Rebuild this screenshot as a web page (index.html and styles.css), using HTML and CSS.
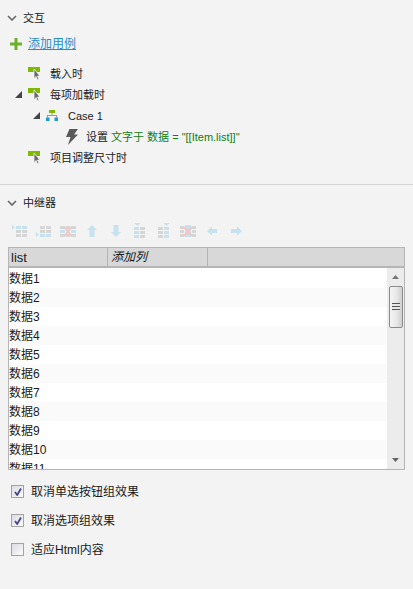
FILE: index.html
```html
<!DOCTYPE html>
<html>

<head>
  <title>交互</title>
  <link rel="stylesheet" href="styles.css">
</head>

<body>
  <svg class="defs" width="0" height="0">
    <symbol id="event" viewBox="0 0 12 14">
      <path d="M0 0H12V5H0Z" fill="#7fb900" />
      <path d="M6 2V12L8 9.500L9.500 13L11 12.300L9.500 9H12Z" fill="#6a6a6a" stroke="#f3f3f3" stroke-width="0.8" />
    </symbol>
    <symbol id="tri" viewBox="0 0 8 8">
      <path d="M7 0V7H0Z" fill="#444" />
    </symbol>
    <symbol id="chev" viewBox="0 0 10 6">
      <path d="M1 1L5 5L9 1" fill="none" stroke="#666" stroke-width="1.6" />
    </symbol>
  </svg>

  <section class="panel interactions">
    <div class="heading">
      <svg class="chevron"><use href="#chev" /></svg>
      <span>交互</span>
    </div>
    <div class="add-case">
      <svg class="plus" viewBox="0 0 12 12"><path d="M4.500 0H7.500V4.500H12V7.500H7.500V12H4.500V7.500H0V4.500H4.500Z" fill="#6eb22c" /></svg>
      <a href="#">添加用例</a>
    </div>
    <ul class="tree">
      <li class="node level1">
        <span class="toggle"></span>
        <svg class="ev"><use href="#event" /></svg>
        <span>载入时</span>
      </li>
      <li class="node level1">
        <span class="toggle"><svg class="tri"><use href="#tri" /></svg></span>
        <svg class="ev"><use href="#event" /></svg>
        <span>每项加载时</span>
      </li>
      <li class="node level2">
        <span class="toggle"><svg class="tri"><use href="#tri" /></svg></span>
        <svg class="case-icon" viewBox="0 0 12 11">
          <path d="M3 0H9V3H3Z" fill="#7fb900" />
          <path d="M5.500 3H6.500V5H11V7.500H10V6H2V7.500H1V5H5.500Z" fill="#999" />
          <path d="M0 7.500H3.500V11H0ZM8.500 7.500H12V11H8.500Z" fill="#1c9ad6" />
        </svg>
        <span class="case-name">Case 1</span>
      </li>
      <li class="node level3">
        <svg class="bolt" viewBox="0 0 12 16"><path d="M3.500 0H12L8 5.500H12L2 16L4.500 8H0Z" fill="#595959" /></svg>
        <span>设置 <span class="act">文字于 数据 = "[[Item.list]]"</span></span>
      </li>
      <li class="node level1">
        <span class="toggle"></span>
        <svg class="ev"><use href="#event" /></svg>
        <span>项目调整尺寸时</span>
      </li>
    </ul>
  </section>

  <section class="panel repeater">
    <div class="heading">
      <svg class="chevron"><use href="#chev" /></svg>
      <span>中继器</span>
    </div>

    <div class="toolbar">
      <svg viewBox="0 0 16 16"><path d="M0 2L3 4.500L0 7Z" fill="#c5e2ee" /><path d="M4 3H9V6H4ZM10 3H15V6H10Z" fill="#c5e2ee" /><path d="M4 7H9V10H4ZM10 7H15V10H10ZM4 11H9V14H4ZM10 11H15V14H10Z" fill="#d6d6d6" /></svg>
      <svg viewBox="0 0 16 16"><path d="M0 9L3 11.500L0 14Z" fill="#c5e2ee" /><path d="M4 11H9V14H4ZM10 11H15V14H10Z" fill="#c5e2ee" /><path d="M4 3H9V6H4ZM10 3H15V6H10ZM4 7H9V10H4ZM10 7H15V10H10Z" fill="#d6d6d6" /></svg>
      <svg viewBox="0 0 16 16"><path d="M0 3H5V6H0ZM6 3H10V6H6ZM11 3H16V6H11ZM0 11H5V14H0ZM6 11H10V14H6ZM11 11H16V14H11Z" fill="#d6d6d6" /><path d="M0 7H5V10H0ZM11 7H16V10H11Z" fill="#c5e2ee" /><path d="M4.500 4L11.500 13M11.500 4L4.500 13" stroke="#f3c6c6" stroke-width="2" /></svg>
      <svg viewBox="0 0 16 16"><path d="M8 2L13 7H10.500V14H5.500V7H3Z" fill="#c5e2ee" /></svg>
      <svg viewBox="0 0 16 16"><path d="M8 14L13 9H10.500V2H5.500V9H3Z" fill="#c5e2ee" /></svg>
      <svg viewBox="0 0 16 16"><path d="M2.500 0H8.500L5.500 3Z" fill="#c5e2ee" /><path d="M2 4H7V7H2ZM2 8H7V11H2ZM2 12H7V15H2Z" fill="#c5e2ee" /><path d="M8 4H13V7H8ZM8 8H13V11H8ZM8 12H13V15H8Z" fill="#d6d6d6" /></svg>
      <svg viewBox="0 0 16 16"><path d="M7.500 0H13.500L10.500 3Z" fill="#c5e2ee" /><path d="M8 4H13V7H8ZM8 8H13V11H8ZM8 12H13V15H8Z" fill="#c5e2ee" /><path d="M2 4H7V7H2ZM2 8H7V11H2ZM2 12H7V15H2Z" fill="#d6d6d6" /></svg>
      <svg viewBox="0 0 16 16"><path d="M0 3H4V6H0ZM12 3H16V6H12ZM0 7H4V10H0ZM12 7H16V10H12ZM0 11H4V14H0ZM12 11H16V14H12Z" fill="#d6d6d6" /><path d="M5 2H11V14H5Z" fill="#c5e2ee" /><path d="M4 4L12 13M12 4L4 13" stroke="#f3c6c6" stroke-width="2" /></svg>
      <svg viewBox="0 0 16 16"><path d="M3 8L8 3.500V6H13V10H8V12.500Z" fill="#c5e2ee" /></svg>
      <svg viewBox="0 0 16 16"><path d="M14 8L9 3.500V6H3V10H9V12.500Z" fill="#c5e2ee" /></svg>
    </div>

    <div class="grid">
      <div class="grid-head">
        <div class="col first">list</div>
        <div class="col add">添加列</div>
        <div class="col"></div>
      </div>
      <div class="grid-body">
        <div class="rows">
          <div class="row">数据1</div>
          <div class="row">数据2</div>
          <div class="row">数据3</div>
          <div class="row">数据4</div>
          <div class="row">数据5</div>
          <div class="row">数据6</div>
          <div class="row">数据7</div>
          <div class="row">数据8</div>
          <div class="row">数据9</div>
          <div class="row">数据10</div>
          <div class="row">数据11</div>
        </div>
        <div class="scrollbar">
          <svg class="arrow" viewBox="0 0 7 4"><path d="M3.500 0L7 4H0Z" fill="#777" /></svg>
          <div class="thumb"><span class="grip"></span></div>
          <svg class="arrow down" viewBox="0 0 7 4"><path d="M0 0H7L3.500 4Z" fill="#666" /></svg>
        </div>
      </div>
    </div>

    <div class="options">
      <label class="option"><span class="box"><svg viewBox="0 0 8 8"><path d="M1 4L3.200 7L7 0.500" fill="none" stroke="#46468c" stroke-width="1.800" /></svg></span>取消单选按钮组效果</label>
      <label class="option"><span class="box"><svg viewBox="0 0 8 8"><path d="M1 4L3.200 7L7 0.500" fill="none" stroke="#46468c" stroke-width="1.800" /></svg></span>取消选项组效果</label>
      <label class="option"><span class="box"></span>适应Html内容</label>
    </div>
  </section>
</body>

</html>
```

FILE: styles.css
```css
html, body {
  margin: 0;
  height: 100%;
}
body {
  background: #f3f3f3;
  color: #1a1a1a;
  font: 12px/16px "Liberation Sans", "Noto Sans CJK SC", sans-serif;
  overflow: hidden;
}
.defs {
  display: block;
}
.panel {
  display: block;
}
.interactions {
  height: 184px;
  border-bottom: 1px solid #d4d4d4;
  box-sizing: content-box;
}
.heading {
  display: flex;
  align-items: center;
  height: 16px;
  padding-left: 7px;
  font-size: 11px;
}
.interactions .heading {
  padding-top: 10px;
}
.repeater .heading {
  padding-top: 10px;
}
.chevron {
  width: 10px;
  height: 6px;
  margin-right: 6px;
}
.add-case {
  display: flex;
  align-items: center;
  height: 16px;
  margin-top: 10px;
  padding-left: 10px;
}
.plus {
  width: 12px;
  height: 12px;
  margin-right: 6px;
}
.add-case a {
  color: #1f8ecf;
}
.tree {
  list-style: none;
  margin: 11px 0 0;
  padding: 0;
  font-size: 11px;
}
.node {
  display: flex;
  align-items: center;
  height: 21px;
}
.level1 {
  padding-left: 15px;
}
.level2 {
  padding-left: 33px;
}
.level3 {
  padding-left: 66px;
}
.toggle {
  display: flex;
  align-items: center;
  width: 13px;
  height: 8px;
}
.tri {
  width: 8px;
  height: 8px;
}
.ev {
  width: 12px;
  height: 14px;
  margin-right: 10px;
}
.case-icon {
  width: 12px;
  height: 11px;
  margin-right: 10px;
}
.bolt {
  width: 12px;
  height: 16px;
  margin-right: 8px;
}
.act {
  color: #108010;
}

.toolbar {
  display: flex;
  align-items: center;
  gap: 8px;
  height: 16px;
  margin-top: 12px;
  padding-left: 12px;
}
.toolbar svg {
  width: 16px;
  height: 16px;
}

.grid {
  margin: 8px 8px 0;
  border: 1px solid #b5b5b5;
  border-top: 0;
  width: 395px;
}
.grid-head {
  display: flex;
  height: 18px;
  background: #d8d8d8;
  border-top: 1px solid #b5b5b5;
  border-bottom: 2px solid #b5b5b5;
}
.col {
  width: 97px;
  border-right: 1px solid #b5b5b5;
  padding-left: 2px;
  box-sizing: content-box;
  line-height: 19px;
}
.col.first {
  width: 96px;
  font-size: 13px;
}
.col.add {
  font-style: italic;
  width: 96px;
  padding-left: 3px;
}
.col:last-child {
  flex: 1;
  border-right: 0;
}
.grid-body {
  display: flex;
  height: 201px;
  background: #fff;
  overflow: hidden;
}
.rows {
  flex: 1;
  padding-top: 1px;
  overflow: hidden;
}
.row {
  height: 19px;
  line-height: 21px;
  white-space: nowrap;
}
.row:nth-child(even) {
  background: #fafafa;
}
.scrollbar {
  display: flex;
  flex-direction: column;
  align-items: center;
  width: 17px;
  background: #ececec;
  padding-top: 7px;
}
.arrow {
  width: 7px;
  height: 4px;
}
.arrow.down {
  margin-top: auto;
  margin-bottom: 7px;
}
.thumb {
  display: flex;
  align-items: center;
  justify-content: center;
  width: 14px;
  height: 42px;
  margin-top: 7px;
  box-sizing: border-box;
  border: 1px solid #8b8b8b;
  border-radius: 2px;
  background: linear-gradient(to right, #f4f4f4, #e8e8e8 55%, #cfcfcf);
}
.grip {
  display: block;
  width: 8px;
  height: 8px;
  background: repeating-linear-gradient(to bottom, #555 0, #555 1px, #e8e8e8 1px, #e8e8e8 3px);
}

.options {
  margin-top: 7px;
  padding-left: 11px;
}
.option {
  display: flex;
  align-items: center;
  height: 29px;
}
.box {
  display: flex;
  align-items: center;
  justify-content: center;
  width: 11px;
  height: 11px;
  margin-right: 7px;
  border: 1px solid #a3a3a3;
  background: linear-gradient(135deg, #dcdce2, #fbfbfb);
  box-sizing: content-box;
}
.box svg {
  width: 8px;
  height: 8px;
}
```
